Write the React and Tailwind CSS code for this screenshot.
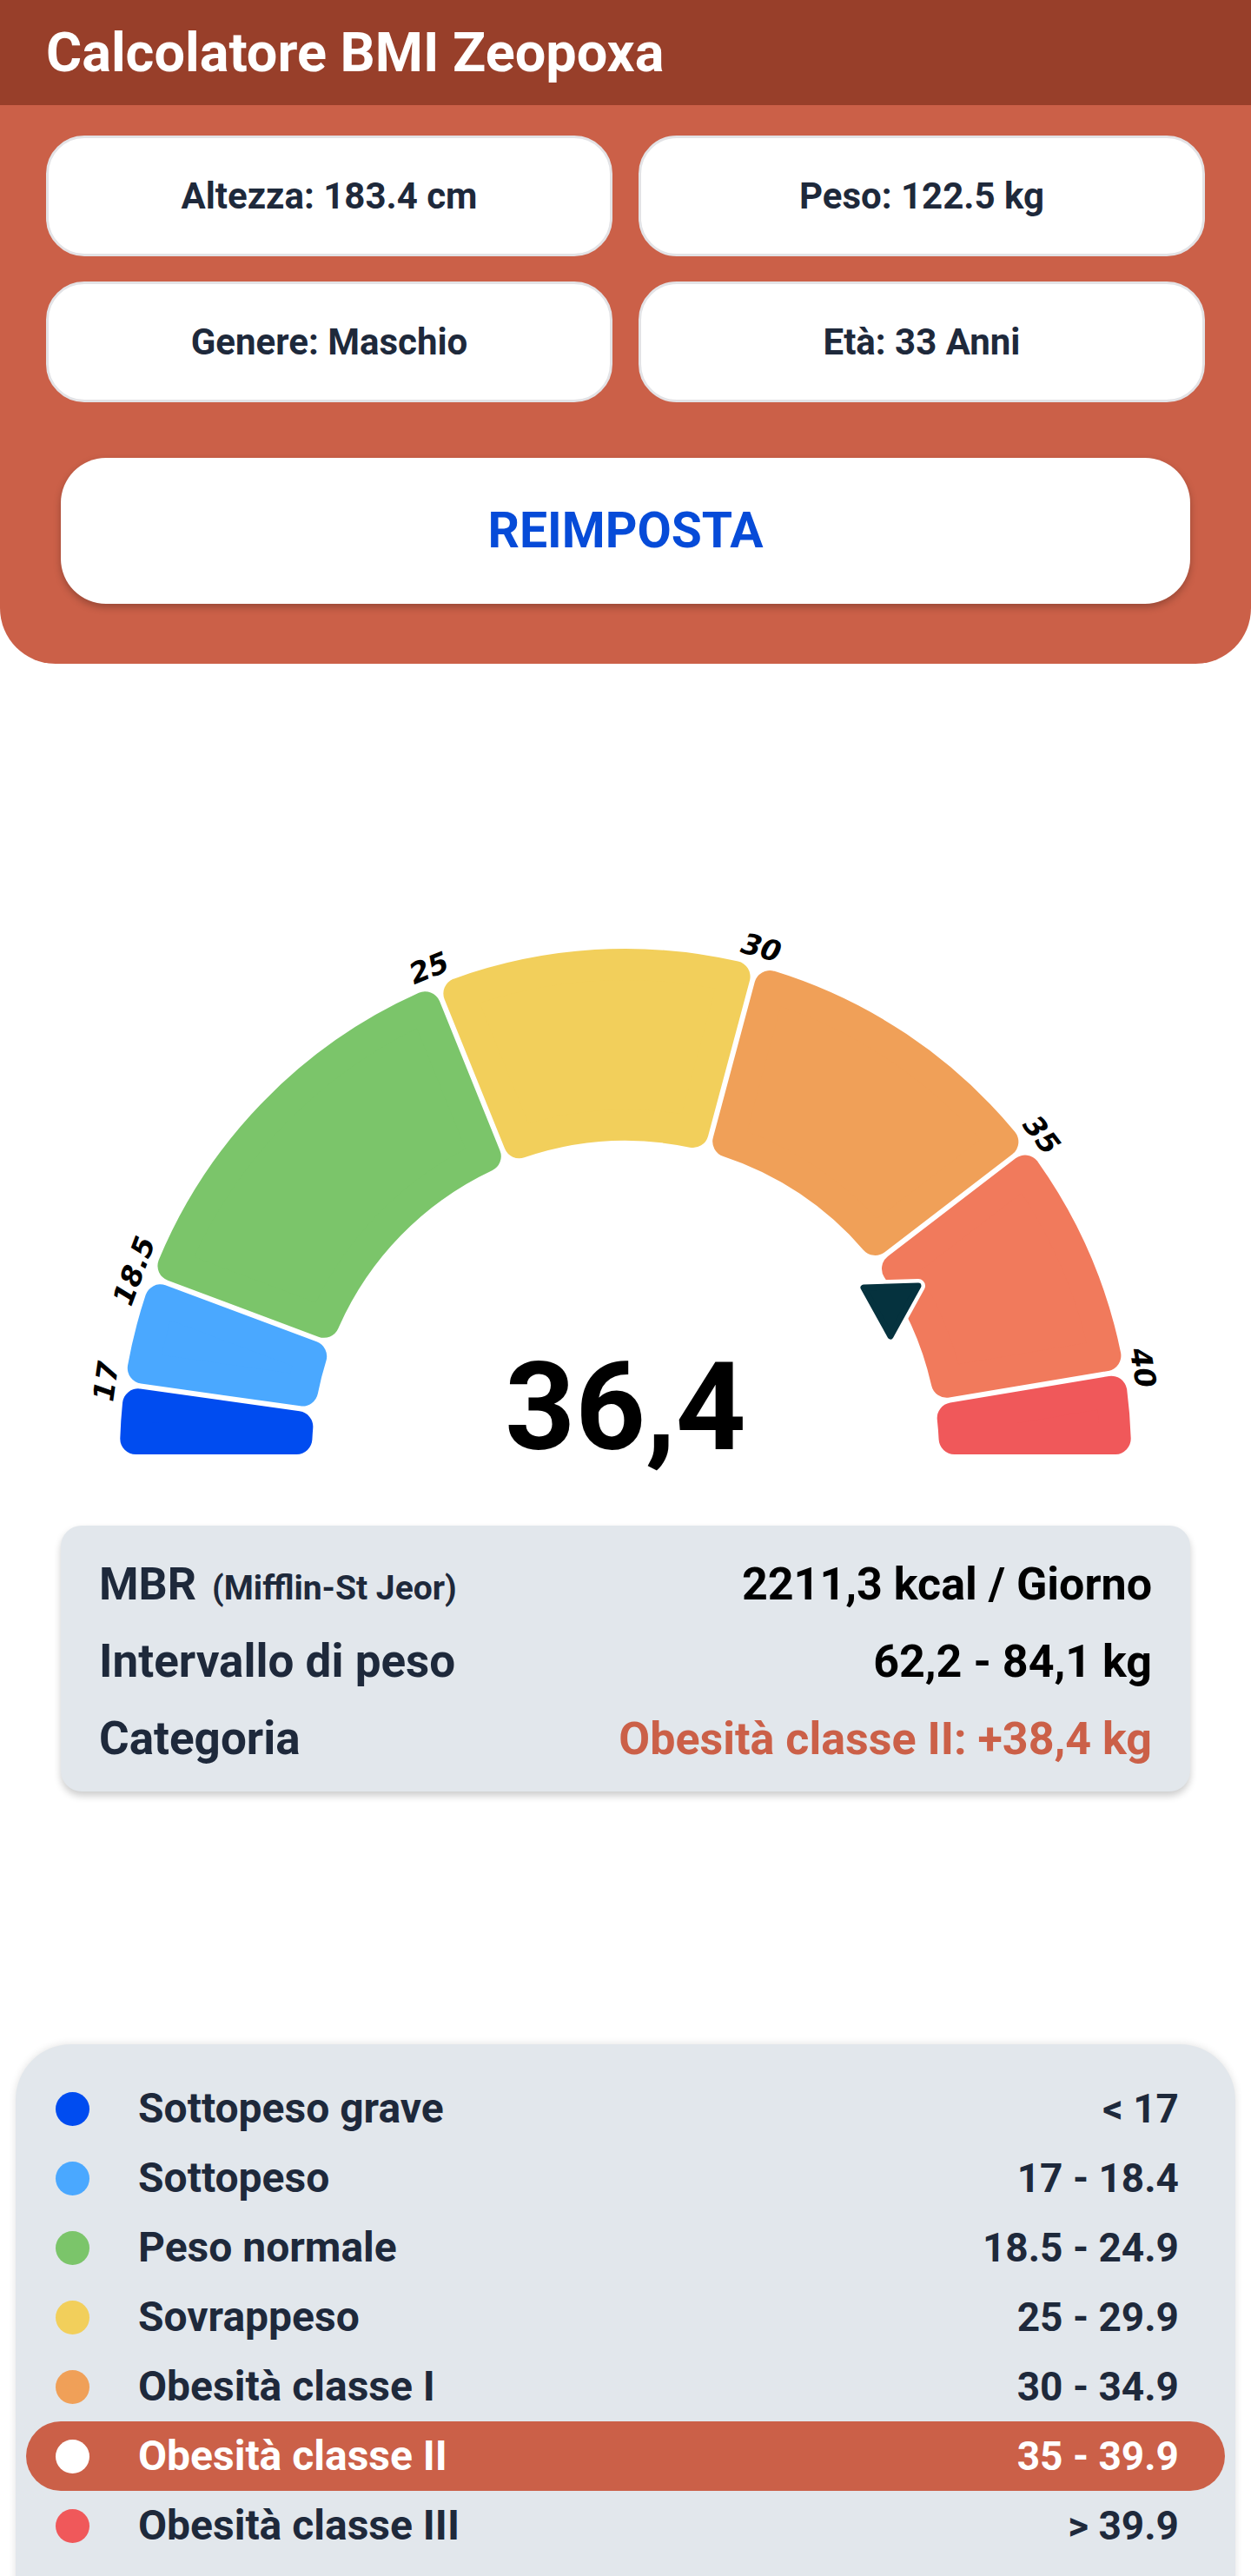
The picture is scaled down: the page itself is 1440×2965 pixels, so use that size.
import React from "react";

const CX = 720;
const CY = 634;
const R_OUT = 582;
const R_IN = 361;
const CORNER = 18;
const GAP = 6;

const segments = [
  { from: 0, to: 8, color: "#004cf0" },
  { from: 8, to: 20.5, color: "#4aa8ff" },
  { from: 20.5, to: 68, color: "#7bc56a" },
  { from: 68, to: 105, color: "#f2cf5b" },
  { from: 105, to: 142.5, color: "#f0a058" },
  { from: 142.5, to: 170.5, color: "#f17a5c" },
  { from: 170.5, to: 180, color: "#f0585a" },
];

const ticks = [
  { at: 8, label: "17" },
  { at: 20.5, label: "18.5" },
  { at: 68, label: "25" },
  { at: 105, label: "30" },
  { at: 142.5, label: "35" },
  { at: 170.5, label: "40" },
];

const inputs = ["Altezza: 183.4 cm", "Peso: 122.5 kg", "Genere: Maschio", "Età: 33 Anni"];

const legend = [
  { name: "Sottopeso grave", range: "< 17", color: "bg-[#004cf0]" },
  { name: "Sottopeso", range: "17 - 18.4", color: "bg-[#4aa8ff]" },
  { name: "Peso normale", range: "18.5 - 24.9", color: "bg-[#7bc56a]" },
  { name: "Sovrappeso", range: "25 - 29.9", color: "bg-[#f2cf5b]" },
  { name: "Obesità classe I", range: "30 - 34.9", color: "bg-[#f0a058]" },
  { name: "Obesità classe II", range: "35 - 39.9", color: "bg-white", active: true },
  { name: "Obesità classe III", range: "> 39.9", color: "bg-[#f0585a]" },
];

const rad = (d) => (d * Math.PI) / 180;
const deg = (r) => (r * 180) / Math.PI;

// angle measured from the left horizontal, going over the top
function pt(r, th) {
  const x = CX - r * Math.cos(rad(th));
  const y = CY - r * Math.sin(rad(th));
  return `${x.toFixed(2)},${y.toFixed(2)}`;
}

function segPath(a, b) {
  const ro = R_OUT - CORNER;
  const ri = R_IN + CORNER;
  const da = a === 0 ? CORNER : CORNER + GAP / 2;
  const db = b === 180 ? CORNER : CORNER + GAP / 2;
  const off = (d, r) => deg(Math.asin(d / r));
  return `M${pt(ro, a + off(da, ro))} A${ro} ${ro} 0 0 1 ${pt(ro, b - off(db, ro))} L${pt(ri, b - off(db, ri))} A${ri} ${ri} 0 0 0 ${pt(ri, a + off(da, ri))} Z`;
}

function Gauge() {
  return (
    <svg width="1440" height="690" viewBox="0 0 1440 690" className="block mt-[276px]">
      {segments.map((s) => (
        <path
          key={s.from}
          d={segPath(s.from, s.to)}
          fill={s.color}
          stroke={s.color}
          strokeWidth={CORNER * 2}
          strokeLinejoin="round"
        />
      ))}
      {ticks.map((t) => {
        const x = CX - 604 * Math.cos(rad(t.at));
        const y = CY - 604 * Math.sin(rad(t.at));
        return (
          <text
            key={t.label}
            x={x}
            y={y}
            transform={`rotate(${t.at - 90} ${x} ${y})`}
            textAnchor="middle"
            dominantBaseline="central"
            fontFamily="'DejaVu Sans', sans-serif"
            fontWeight="bold"
            fontStyle="italic"
            fontSize="33"
            fill="#000"
          >
            {t.label}
          </text>
        );
      })}
      <polygon points="994,442 1057,440 1025,498" fill="#fff" stroke="#fff" strokeWidth="16" strokeLinejoin="round" />
      <polygon points="994,442 1057,440 1025,498" fill="#05323e" stroke="#05323e" strokeWidth="7" strokeLinejoin="round" />
      <text x="720" y="628" textAnchor="middle" fontFamily="Roboto, sans-serif" fontWeight="bold" fontSize="141" fill="#000">
        36,4
      </text>
    </svg>
  );
}

export default function App() {
  return (
    <div className="min-h-screen bg-white font-[Roboto,sans-serif] overflow-hidden">
      <header className="h-[121px] bg-[#983f2a] flex items-center px-[53px]">
        <h1 className="text-[63px] font-bold text-white leading-none">Calcolatore BMI Zeopoxa</h1>
      </header>

      <section className="bg-[#cb6048] rounded-b-[64px] px-[53px] pt-[35px] pb-[69px]">
        <div className="grid grid-cols-2 gap-x-[30px] gap-y-[29px]">
          {inputs.map((c) => (
            <div
              key={c}
              className="h-[139px] bg-white rounded-[44px] border-[3px] border-[#e3e3e6] flex items-center justify-center text-[42px] font-bold text-[#1e293b]"
            >
              {c}
            </div>
          ))}
        </div>
        <div className="mt-[64px] px-[17px]">
          <button className="w-full h-[168px] bg-white rounded-[52px] shadow-[0_4px_8px_rgba(0,0,0,0.25)] flex items-center justify-center text-[57px] font-bold text-[#064bd8]">
            REIMPOSTA
          </button>
        </div>
      </section>

      <Gauge />

      <div className="mx-[70px] mt-[26px] rounded-[24px] bg-[#e2e7ec] shadow-[0_5px_9px_rgba(0,0,0,0.2)] px-[44px] pt-[23px] pb-[16px]">
        <div className="flex items-baseline justify-between h-[89px] leading-[89px]">
          <div className="flex items-baseline gap-[18px] text-[#1e293b] font-bold">
            <span className="text-[52px]">MBR</span>
            <span className="text-[39px]">(Mifflin-St Jeor)</span>
          </div>
          <span className="text-[52px] font-bold text-black">2211,3 kcal / Giorno</span>
        </div>
        <div className="flex items-baseline justify-between h-[89px] leading-[89px]">
          <span className="text-[53px] font-bold text-[#1e293b]">Intervallo di peso</span>
          <span className="text-[52px] font-bold text-black">62,2 - 84,1 kg</span>
        </div>
        <div className="flex items-baseline justify-between h-[89px] leading-[89px]">
          <span className="text-[53px] font-bold text-[#1e293b]">Categoria</span>
          <span className="text-[52px] font-bold text-[#cb6048]">Obesità classe II: +38,4 kg</span>
        </div>
      </div>

      <div className="mx-[18px] mt-[291px] rounded-t-[64px] bg-[#e2e7ec] shadow-[0_0_10px_rgba(0,0,0,0.12)] pt-[34px] px-[12px] pb-[40px]">
        {legend.map((l) => (
          <div
            key={l.name}
            className={`flex items-center h-[80px] rounded-full pl-[34px] pr-[53px] font-bold leading-[80px] ${
              l.active ? "bg-[#cb6048] text-white" : "text-[#1e293b]"
            }`}
          >
            <span className={`w-[39px] h-[39px] rounded-full shrink-0 ${l.color}`} />
            <span className="ml-[56px] flex-1 text-[48px]">{l.name}</span>
            <span className="text-[46px]">{l.range}</span>
          </div>
        ))}
      </div>
    </div>
  );
}
